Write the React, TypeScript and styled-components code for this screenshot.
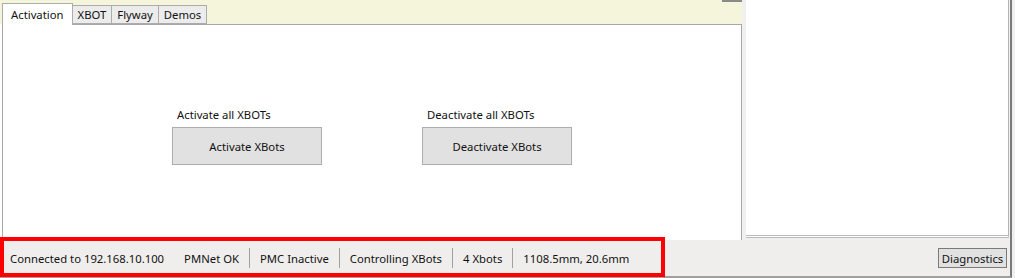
import React from "react";
import styled, { createGlobalStyle } from "styled-components";

const Global = createGlobalStyle`
  html, body { margin: 0; padding: 0; background: #f0f0f0; }
  body { font-family: "Noto Sans", "Open Sans", sans-serif; font-size: 11.3px; color: #1a1a1a; }
  * { box-sizing: border-box; }
`;

const Page = styled.div`
  position: relative;
  width: 1015px;
  height: 278px;
  display: flex;
  flex-direction: column;
  background: #f0f0f0;
  overflow: hidden;
`;

const Main = styled.div`
  display: flex;
  height: 240px;
`;

const LeftPanel = styled.div`
  width: 742px;
  display: flex;
  flex-direction: column;
  background: #ffffff;
`;

const TabStrip = styled.div`
  position: relative;
  height: 24px;
  background: #f5f5dc;
  display: flex;
  align-items: flex-end;
  padding-left: 2px;
`;

const ScrollStub = styled.div`
  position: absolute;
  right: 0;
  top: 0;
  width: 20px;
  height: 2px;
  background: #8a8a8a;
`;

const Tab = styled.div<{ $active?: boolean }>`
  height: ${(p) => (p.$active ? 22 : 19)}px;
  padding: 0 ${(p) => (p.$active ? 8 : 5)}px;
  display: flex;
  align-items: center;
  background: ${(p) => (p.$active ? "#ffffff" : "#ececec")};
  border: 1px solid #acacac;
  border-bottom: ${(p) => (p.$active ? "none" : "1px solid #acacac")};
  margin-left: ${(p) => (p.$active ? 0 : -1)}px;
  margin-bottom: ${(p) => (p.$active ? -1 : 0)}px;
  position: relative;
  z-index: ${(p) => (p.$active ? 2 : 1)};
  color: #111;
`;

const Content = styled.div`
  flex: 1;
  margin-left: 2px;
  border: 1px solid #a8a8a8;
  border-bottom: none;
  background: #ffffff;
  display: flex;
  padding: 82px 0 0 169px;
  gap: 100px;
`;

const Group = styled.div`
  display: flex;
  flex-direction: column;
`;

const GroupLabel = styled.div`
  line-height: 16px;
  padding-left: 5px;
  margin-bottom: 4px;
  color: #111;
`;

const BigButton = styled.div`
  width: 150px;
  height: 38px;
  background: #e1e1e1;
  border: 1px solid #adadad;
  display: flex;
  align-items: center;
  justify-content: center;
  color: #111;
`;

const Gutter = styled.div`
  width: 4px;
  background: #f0f0f0;
`;

const RightPanel = styled.div`
  width: 263px;
  height: 238px;
  background: #ffffff;
  border-right: 1px solid #b4b4b4;
  border-bottom: 3px double #b9b9b9;
`;

const Edge = styled.div`
  flex: 1;
  display: flex;
  background: #f0f0f0;
  padding-left: 1px;
`;

const EdgeLine = styled.div`
  width: 2px;
  background: #7a7a7a;
`;

const StatusBar = styled.div`
  flex: 1;
  display: flex;
  align-items: center;
  background: #f0eeed;
  border-bottom: 2px solid #a0a0a0;
  padding-left: 0;
  padding-right: 3px;
  margin-right: 3px;
  border-right: 2px solid #7a7a7a;
`;

const StatusItem = styled.div<{ $sep?: boolean }>`
  height: 20px;
  display: flex;
  align-items: center;
  padding: 0 10px;
  border-left: ${(p) => (p.$sep ? "1px solid #a0a0a0" : "none")};
  white-space: nowrap;
  color: #111;
`;

const Spacer = styled.div`
  flex: 1;
`;

const DiagButton = styled.div`
  width: 69px;
  height: 20px;
  background: #e1e1e1;
  border: 1px solid #7a7a7a;
  display: flex;
  align-items: center;
  justify-content: center;
  color: #111;
`;

const Highlight = styled.div`
  position: absolute;
  left: 0;
  top: 237px;
  width: 665px;
  height: 40px;
  border: 4px solid #ff0000;
  pointer-events: none;
`;

export default function App() {
  const tabs = ["Activation", "XBOT", "Flyway", "Demos"];
  const status = [
    { text: "Connected to 192.168.10.100", sep: false },
    { text: "PMNet OK", sep: false },
    { text: "PMC Inactive", sep: true },
    { text: "Controlling XBots", sep: true },
    { text: "4 Xbots", sep: true },
    { text: "1108.5mm, 20.6mm", sep: true },
  ];
  return (
    <>
      <Global />
      <Page>
        <Main>
          <LeftPanel>
            <TabStrip>
              {tabs.map((t, i) => (
                <Tab key={t} $active={i === 0}>
                  {t}
                </Tab>
              ))}
              <ScrollStub />
            </TabStrip>
            <Content>
              <Group>
                <GroupLabel>Activate all XBOTs</GroupLabel>
                <BigButton>Activate XBots</BigButton>
              </Group>
              <Group>
                <GroupLabel>Deactivate all XBOTs</GroupLabel>
                <BigButton>Deactivate XBots</BigButton>
              </Group>
            </Content>
          </LeftPanel>
          <Gutter />
          <RightPanel />
          <Edge>
            <EdgeLine />
          </Edge>
        </Main>
        <StatusBar>
          {status.map((s) => (
            <StatusItem key={s.text} $sep={s.sep}>
              {s.text}
            </StatusItem>
          ))}
          <Spacer />
          <DiagButton>Diagnostics</DiagButton>
        </StatusBar>
        <Highlight />
      </Page>
    </>
  );
}
